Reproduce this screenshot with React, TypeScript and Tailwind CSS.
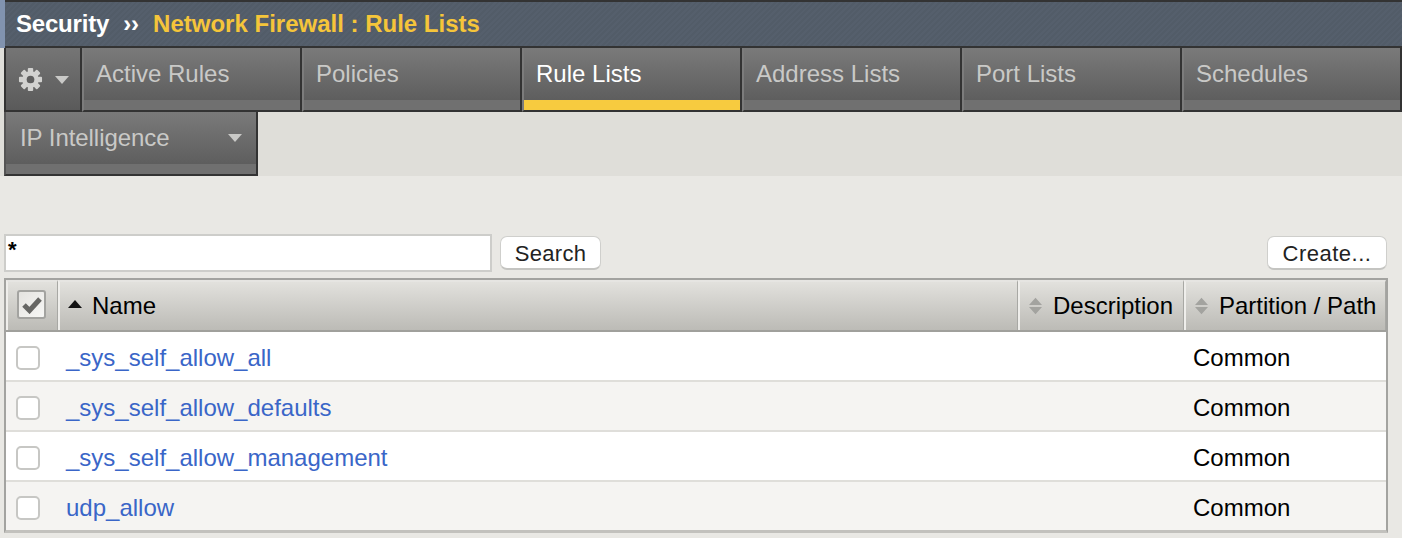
import React from "react";

const font = "font-['Liberation_Sans',Arial,sans-serif]";

function Caret({ className }: { className: string }) {
  return (
    <svg width="14" height="8" viewBox="0 0 14 8" className={className}>
      <path d="M0 0H14L7 8Z" fill="currentColor" />
    </svg>
  );
}

function Gear() {
  return (
    <svg width="25" height="25" viewBox="0 0 26 26" className="block blur-[0.5px]">
      <g fill="#d2d2d0">
        <circle cx="13" cy="13" r="8.6" />
        {[0, 45, 90, 135, 180, 225, 270, 315].map((a) => (
          <rect key={a} x="10.2" y="1" width="5.6" height="5.5" rx="1" transform={`rotate(${a} 13 13)`} />
        ))}
      </g>
      <circle cx="13" cy="13" r="4" fill="#5f5f5f" />
    </svg>
  );
}

function Tab({ label, active }: { label: string; active?: boolean }) {
  return (
    <div className="w-[220px] h-[64px] shrink-0 flex flex-col border-b-2 border-r-2 border-[#333333] border-l-2 border-l-[#7c7c7c] bg-[#333333]">
      <div className="h-[52px] bg-gradient-to-b from-[#7a7a7a] to-[#5e5e5e] pl-[12px] pt-[9px] text-[24px] leading-[34px]">
        <span className={active ? "text-white" : "text-[#c9c9c7]"}>{label}</span>
      </div>
      <div className={active ? "h-[10px] bg-[#f7cb3f]" : "h-[10px] bg-[#707070]"} />
    </div>
  );
}

function SortIcon() {
  return (
    <svg width="13" height="20" viewBox="0 0 14 20" className="block shrink-0">
      <path d="M7 1L14 9H0Z M0 11H14L7 19Z" fill="#a3a39f" />
    </svg>
  );
}

function Header({ className, children }: { className: string; children: React.ReactNode }) {
  return (
    <div className={`${className} h-full flex items-center border-l-2 border-l-[#efeeeb] border-t-2 border-t-[#e6e5e2] border-r border-r-[#a8a8a4] bg-gradient-to-b from-[#e2e1dd] to-[#bcbbb6]`}>
      {children}
    </div>
  );
}

function Row({ name, odd, last }: { name: string; odd: boolean; last?: boolean }) {
  return (
    <div className={`flex items-center pt-[4px] ${last ? "h-[48px]" : "h-[50px] border-b-2 border-[#dfdeda]"} ${odd ? "bg-white" : "bg-[#f5f4f2]"}`}>
      <div className="w-[60px] pl-[10px] shrink-0">
        <div className="w-[24px] h-[24px] rounded-[5px] border-2 border-[#c7c7c4] bg-white" />
      </div>
      <div className="flex-1 text-[24px] text-[#3a66c8]">{name}</div>
      <div className="w-[193px] text-[24px] text-black">Common</div>
    </div>
  );
}

export default function App() {
  const tabs = ["Active Rules", "Policies", "Rule Lists", "Address Lists", "Port Lists", "Schedules"];
  return (
    <div className={`${font} w-[1402px] h-[538px] overflow-hidden bg-[#e9e8e4] flex flex-col`}>
      <div className="flex h-[48px] shrink-0">
        <div className="w-[5px] bg-[#8193af]" />
        <div className="flex-1 border-t-2 border-b-2 border-t-[#333333] border-b-[#333333] bg-[#535d69] bg-[repeating-linear-gradient(135deg,#525c68_0px,#525c68_2px,#555f6c_2px,#555f6c_4px)] flex items-center pl-[11px] text-[24px] font-bold">
          <span className="text-white tracking-[-0.2px]">Security</span>
          <span className="text-white ml-[14px]">››</span>
          <span className="text-[#f5c53a] ml-[14px]">Network Firewall : Rule Lists</span>
        </div>
      </div>

      <div className="flex flex-col bg-[#dfded9] h-[128px] shrink-0">
        <div className="flex h-[64px] pl-[4px]">
          <div className="w-[78px] h-[64px] shrink-0 border-b-2 border-r-2 border-l-2 border-[#333333] bg-gradient-to-b from-[#757575] to-[#5a5a5a] flex items-center pl-[12px] gap-[12px]">
            <Gear />
            <Caret className="text-[#c9c9c7] mt-[2px]" />
          </div>
          {tabs.map((t) => (
            <Tab key={t} label={t} active={t === "Rule Lists"} />
          ))}
        </div>
        <div className="flex h-[64px] pl-[4px]">
          <div className="w-[254px] h-[64px] flex flex-col border-b-2 border-r-2 border-[#333333] border-l-2 border-l-[#555555]">
            <div className="h-[52px] bg-gradient-to-b from-[#7a7a7a] to-[#5e5e5e] pl-[14px] pr-[14px] pt-[9px] text-[24px] leading-[34px] text-[#c9c9c7] flex justify-between">
              <span className="tracking-[-0.05px]">IP Intelligence</span>
              <Caret className="mt-[13px]" />
            </div>
            <div className="h-[10px] bg-[#707070]" />
          </div>
        </div>
      </div>

      <div className="flex items-center justify-between pl-[4px] pr-[15px] mt-[58px] h-[38px] shrink-0">
        <div className="flex items-center">
          <div className="w-[488px] h-[38px] border-2 border-[#cdcdca] bg-white pl-[2px] text-[22px] leading-[28px] text-black font-bold">*</div>
          <div className="ml-[8px] w-[101px] h-[34px] rounded-[7px] border border-[#cfcfcc] border-b-2 border-b-[#c4c4c1] bg-white text-center text-[22px] leading-[34px] tracking-[0.3px] text-[#222222]">Search</div>
        </div>
        <div className="w-[120px] h-[34px] rounded-[7px] border border-[#cfcfcc] border-b-2 border-b-[#c4c4c1] bg-white text-center text-[22px] leading-[34px] tracking-[0.5px] text-[#222222]">Create...</div>
      </div>

      <div className="ml-[4px] mt-[6px] w-[1384px] border-2 border-[#a3a3a0] border-b-[3px] border-b-[#c2c1bd]">
        <div className="h-[52px] flex border-b-2 border-[#a0a09c] text-[24px] text-black">
          <Header className="w-[52px] shrink-0 pl-[9px]">
            <div className="w-[29px] h-[29px] mb-[3px] rounded-[3px] border-2 border-[#a3a3a0] bg-gradient-to-br from-[#e4e3e0] to-[#f7f7f5] flex items-center justify-center">
              <svg width="20" height="18" viewBox="0 0 20 18"><path d="M2 9L7.5 14.5L18 3" fill="none" stroke="#666664" strokeWidth="5" /></svg>
            </div>
          </Header>
          <Header className="flex-1 pl-[8px]">
            <svg width="14" height="8" viewBox="0 0 14 8" className="block mb-[5px]"><path d="M7 0L14 8H0Z" fill="#111111" /></svg>
            <span className="ml-[10px]">Name</span>
          </Header>
          <Header className="w-[166px] shrink-0 pl-[9px]">
            <SortIcon />
            <span className="ml-[11px]">Description</span>
          </Header>
          <Header className="w-[202px] shrink-0 pl-[9px]">
            <SortIcon />
            <span className="ml-[11px]">Partition / Path</span>
          </Header>
        </div>
        <Row name="_sys_self_allow_all" odd />
        <Row name="_sys_self_allow_defaults" odd={false} />
        <Row name="_sys_self_allow_management" odd />
        <Row name="udp_allow" odd={false} last />
      </div>
    </div>
  );
}
